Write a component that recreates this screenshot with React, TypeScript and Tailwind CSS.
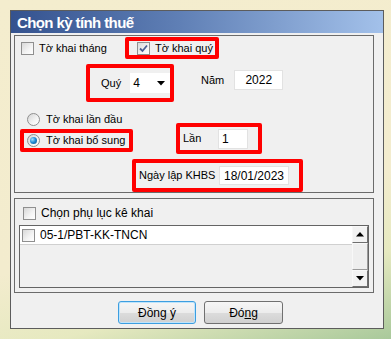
import React from "react";

const font = { fontFamily: '"Liberation Sans", Arial, sans-serif' };

function Check({ checked = false }: { checked?: boolean }) {
  return (
    <div className="w-[13px] h-[13px] shrink-0 border border-[#8f8f8f] bg-[linear-gradient(135deg,#d8d8d8_0%,#f4f4f4_60%,#ffffff_100%)] flex items-center justify-center">
      {checked && (
        <svg width="9" height="9" viewBox="0 0 9 9">
          <path d="M1 4.5 L3.5 7 L8 1.5" fill="none" stroke="#4b5f94" strokeWidth="1.8" />
        </svg>
      )}
    </div>
  );
}

function Radio({ checked = false }: { checked?: boolean }) {
  return (
    <div className="w-[13px] h-[13px] shrink-0 rounded-full border border-[#8f8f8f] bg-[linear-gradient(135deg,#d4d4d4_0%,#f4f4f4_60%,#ffffff_100%)] flex items-center justify-center">
      {checked && (
        <div className="w-[7px] h-[7px] rounded-full bg-[radial-gradient(circle_at_35%_35%,#9fe0ff_0%,#1e86d0_50%,#0d4f8a_100%)]" />
      )}
    </div>
  );
}

function Input({ w, h, value, align = "center" }: { w: string; h: string; value: string; align?: string }) {
  return (
    <div className={`${w} ${h} bg-white border border-[#e2e2e2] flex items-center ${align} text-[12px] text-black`}>
      {value}
    </div>
  );
}

export default function App() {
  return (
    <div
      className="w-[391px] h-[339px] overflow-hidden pt-[10px] pl-[10px] bg-[linear-gradient(165deg,#f4edce_0%,#f3ecce_62%,#e6e9c0_80%,#a9c99b_100%)] text-black"
      style={font}
    >
      <div className="w-[374px] h-[319px] border border-[#5c5c5c] bg-[#f0f0f0] flex flex-col">
        {/* title bar */}
        <div className="h-[22px] bg-[linear-gradient(90deg,#34528f_0%,#5f7fb5_45%,#a3c1ea_100%)] flex items-center pl-[6px]">
          <span className="text-white font-bold text-[15px] tracking-[-0.6px] leading-none">Chọn kỳ tính thuế</span>
        </div>

        <div className="pl-[3px] pt-[2px] flex flex-col text-[11px] whitespace-nowrap">
          {/* group 1 */}
          <div className="w-[360px] h-[158px] border border-[#6b6b6b] flex flex-col">
            {/* row 1 */}
            <div className="mt-[1px] h-[22px] flex items-center">
              <div className="ml-[6px] w-[104px] flex items-center gap-[5px]">
                <Check />
                <span>Tờ khai tháng</span>
              </div>
              <div className="w-[94px] h-[22px] border-4 border-[#ff0000] rounded-[2px] flex items-center pl-[8px] gap-[5px]">
                <Check checked />
                <span>Tờ khai quý</span>
              </div>
            </div>

            {/* row 2 */}
            <div className="mt-[5px] flex items-start">
              <div className="ml-[71px] w-[88px] h-[38px] border-4 border-[#ff0000] rounded-[2px] flex items-center pl-[11px]">
                <span>Quý</span>
                <div className="ml-[9px] w-[41px] h-[20px] bg-white flex items-center pl-[3px] pr-[5px] justify-between">
                  <span className="text-[12px]">4</span>
                  <svg width="8" height="5" viewBox="0 0 8 5">
                    <path d="M0 0 L8 0 L4 4.5 Z" fill="#000" />
                  </svg>
                </div>
              </div>
              <div className="ml-[27px] mt-[6px] flex items-center">
                <span>Năm</span>
                <div className="ml-[10px]">
                  <Input w="w-[49px]" h="h-[20px]" value="2022" align="justify-center" />
                </div>
              </div>
            </div>

            {/* row 3 & 4 */}
            <div className="mt-[6px] flex items-start">
              <div className="ml-[5px] w-[113px] flex flex-col">
                <div className="mt-[3px] h-[16px] pl-[7px] flex items-center gap-[6px]">
                  <Radio />
                  <span>Tờ khai lần đầu</span>
                </div>
                <div className="mt-[2px] w-[113px] h-[23px] border-4 border-[#ff0000] rounded-[2px] flex items-center pl-[3px] gap-[6px]">
                  <Radio checked />
                  <span>Tờ khai bổ sung</span>
                </div>
              </div>
              <div className="ml-[43px] mt-[15px] w-[86px] h-[31px] border-4 border-[#ff0000] rounded-[2px] flex items-center pl-[3px]">
                <span>Lần</span>
                <div className="ml-auto mr-[10px]">
                  <Input w="w-[30px]" h="h-[20px]" value="1" align="justify-start pl-[3px]" />
                </div>
              </div>
            </div>

            {/* row 5 */}
            <div className="mt-[5px] ml-[117px] w-[171px] h-[33px] border-4 border-[#ff0000] rounded-[2px] flex items-center pl-[3px]">
              <span>Ngày lập KHBS</span>
              <div className="ml-auto mr-[10px]">
                <Input w="w-[70px]" h="h-[19px]" value="18/01/2023" align="justify-center" />
              </div>
            </div>
          </div>

          {/* group 2 */}
          <div className="mt-[5px] w-[360px] h-[95px] border border-[#6b6b6b] flex flex-col">
            <div className="mt-[6px] ml-[8px] h-[16px] flex items-center gap-[5px]">
              <Check />
              <span className="text-[12px]">Chọn phụ lục kê khai</span>
            </div>
            <div className="mt-[4px] ml-[4px] w-[350px] h-[63px] border border-[#646464] flex">
              <div className="flex-1 flex flex-col">
                <div className="h-[19px] bg-white border-b border-[#d0d0d0] flex items-center pl-[2px] gap-[5px]">
                  <Check />
                  <span className="text-[12px]">05-1/PBT-KK-TNCN</span>
                </div>
              </div>
              <div className="w-[16px] flex flex-col">
                <div className="h-[17px] bg-[#f2f2f2] border border-[#f8f8f8] border-r-[#6e6e6e] border-b-[#6e6e6e] flex items-center justify-center">
                  <svg width="8" height="5" viewBox="0 0 8 5">
                    <path d="M0 4.5 L8 4.5 L4 0 Z" fill="#000" />
                  </svg>
                </div>
                <div className="flex-1 bg-[#eeeeee] border border-[#f8f8f8] border-r-[#9a9a9a] border-b-[#9a9a9a]" />
                <div className="h-[17px] bg-[#f2f2f2] border border-[#f8f8f8] border-r-[#6e6e6e] border-b-[#6e6e6e] flex items-center justify-center">
                  <svg width="8" height="5" viewBox="0 0 8 5">
                    <path d="M0 0 L8 0 L4 4.5 Z" fill="#000" />
                  </svg>
                </div>
              </div>
            </div>
          </div>

          {/* buttons */}
          <div className="mt-[8px] pl-[104px] flex gap-[8px] text-[12px]">
            <div className="w-[78px] h-[23px] rounded-[3px] border border-[#3c9ee0] bg-[linear-gradient(180deg,#f6f6f6_0%,#ececec_50%,#dcdcdc_51%,#d0d0d0_100%)] flex items-center justify-center shadow-[inset_0_0_0_1px_#bfe4fb]">
              <span>Đồn<span className="underline">g</span> ý</span>
            </div>
            <div className="w-[79px] h-[23px] rounded-[3px] border border-[#707070] bg-[linear-gradient(180deg,#f6f6f6_0%,#ececec_50%,#dcdcdc_51%,#d0d0d0_100%)] flex items-center justify-center">
              <span>Đó<span className="underline">ng</span></span>
            </div>
          </div>
        </div>
      </div>
    </div>
  );
}
